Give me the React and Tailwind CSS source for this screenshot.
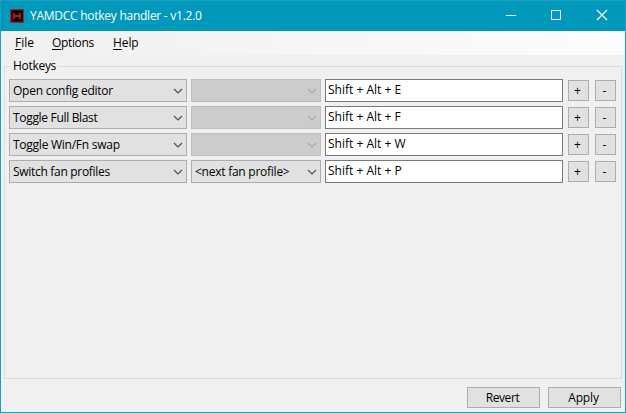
import React from "react";

const rows = [
  { action: "Open config editor", track: "tracking-[-0.25px]", key: "E" },
  { action: "Toggle Full Blast", track: "tracking-[-0.32px]", key: "F" },
  { action: "Toggle Win/Fn swap", track: "tracking-[-0.25px]", key: "W" },
  { action: "Switch fan profiles", track: "tracking-[-0.3px]", key: "P", option: "<next fan profile>" },
];

function Chevron({ className }) {
  return (
    <svg className={`h-[6px] w-[10px] shrink-0 ${className}`} viewBox="0 0 10 6" fill="none" stroke="currentColor" strokeWidth="1.2">
      <path d="M1 1 L5 5 L9 1" />
    </svg>
  );
}

function Combo({ width, text, track = "", pad = "pl-[3px]", disabled }) {
  return (
    <div
      className={`flex h-[23px] items-center justify-between border pr-[3px] ${pad} ${width} ${
        disabled ? "border-[#bfbfbf] bg-[#cccccc]" : "border-[#adadad] bg-[#e1e1e1]"
      }`}
    >
      <span className={`whitespace-nowrap leading-[21px] ${track}`}>{text}</span>
      <Chevron className={disabled ? "text-[#a8a8a8]" : "text-[#505050]"} />
    </div>
  );
}

function SmallButton({ children }) {
  return (
    <button className="flex h-[21px] w-[21px] items-center justify-center border border-[#adadad] bg-[#e1e1e1] pr-[2px] leading-none">
      {children}
    </button>
  );
}

function MenuItem({ text, track }) {
  return (
    <span className={`leading-[24px] ${track}`}>
      <span className="underline decoration-1 underline-offset-2">{text[0]}</span>
      {text.slice(1)}
    </span>
  );
}

export default function App() {
  return (
    <div className="flex h-[413px] w-[626px] flex-col overflow-hidden border border-[#1b9fbf] bg-[#f0f0f0] font-['Open_Sans','Noto_Sans',sans-serif] text-[12px] text-black">
      <header className="flex h-[30px] shrink-0 items-center bg-[#0099bc] pl-[9px] text-white">
        <svg className="h-[14px] w-[14px]" viewBox="0 0 14 14">
          <rect x="0.75" y="0.75" width="12.5" height="12.5" fill="#000" stroke="#b3171f" strokeWidth="1.2" />
          <path d="M4 4V10M10 4V10M4 7H10" stroke="#c4161c" strokeWidth="1.8" fill="none" />
        </svg>
        <span className="ml-[6px] whitespace-nowrap tracking-[-0.26px]">YAMDCC hotkey handler - v1.2.0</span>
        <div className="ml-auto flex">
          <svg className="h-[30px] w-[46px]" viewBox="0 0 46 30" stroke="currentColor" fill="none">
            <path d="M19 14.5H29" />
          </svg>
          <svg className="h-[30px] w-[46px]" viewBox="0 0 46 30" stroke="currentColor" fill="none">
            <path d="M18.5 9.5H27.5V18.5H18.5Z" />
          </svg>
          <svg className="h-[30px] w-[46px]" viewBox="0 0 46 30" stroke="currentColor" fill="none">
            <path d="M18 9L28 19M28 9L18 19" strokeWidth="1.2" />
          </svg>
        </div>
      </header>
      <nav className="flex h-[24px] shrink-0 bg-linear-to-r from-[#f0f0f0] to-[#fcfcfc] pl-[14px]">
        <div className="w-[37px]"><MenuItem text="File" track="" /></div>
        <div className="w-[61px]"><MenuItem text="Options" track="tracking-[-0.35px]" /></div>
        <div><MenuItem text="Help" track="tracking-[-0.1px]" /></div>
      </nav>
      <fieldset className="mx-[3px] mt-[3px] h-[321px] shrink-0 border border-[#dcdcdc] pl-[4px]">
        <legend className="ml-[2px] h-[16px] px-[2px] leading-[16px] tracking-[-0.3px]">Hotkeys</legend>
        <div className="flex flex-col gap-[4px] pt-[5px]">
          {rows.map((r) => (
            <div key={r.key} className="flex h-[23px] items-center">
              <Combo width="w-[178px]" text={r.action} track={r.track} />
              <div className="ml-[4px]">
                <Combo width="w-[130px]" text={r.option} track="tracking-[-0.25px]" pad="pl-[3px]" disabled={!r.option} />
              </div>
              <div className="ml-[4px] h-[23px] w-[238px] border border-[#7a7a7a] bg-white pl-[2px] leading-[20px]">
                Shift + Alt + {r.key}
              </div>
              <div className="ml-[5px] flex gap-[6px]">
                <SmallButton>+</SmallButton>
                <SmallButton>-</SmallButton>
              </div>
            </div>
          ))}
        </div>
      </fieldset>
      <footer className="mt-[8px] flex justify-end gap-[8px] pr-[4px]">
        <button className="h-[21px] w-[73px] border border-[#adadad] bg-[#e1e1e1] pr-[2px] leading-[20px] tracking-[-0.4px]">Revert</button>
        <button className="h-[21px] w-[73px] border border-[#adadad] bg-[#e1e1e1] pr-[2px] leading-[20px] tracking-[-0.15px]">Apply</button>
      </footer>
    </div>
  );
}
